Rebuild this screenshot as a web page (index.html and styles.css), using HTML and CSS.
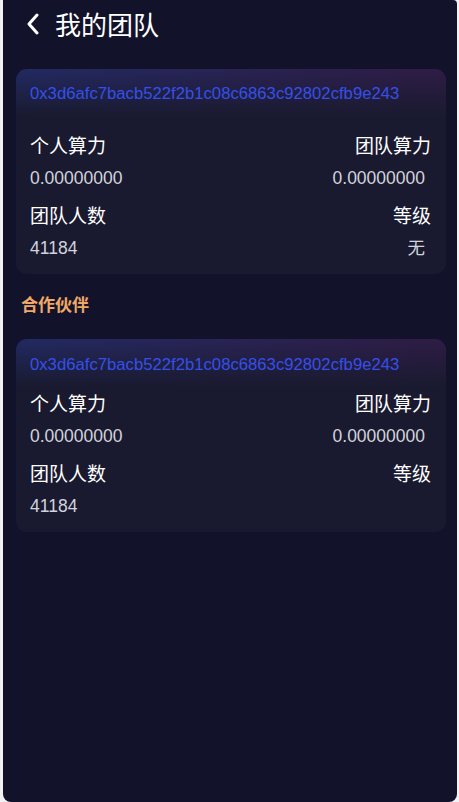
FILE: index.html
```html
<!DOCTYPE html>
<html lang="zh">
<head>
  <meta charset="UTF-8">
  <title>我的团队</title>
  <link rel="stylesheet" href="styles.css">
</head>
<body>
  <div class="app">
    <div class="header">
      <svg class="back" width="16" height="22" viewBox="0 0 16 22">
        <path d="M12 2 L4 11 L12 20" fill="none" stroke="#fff" stroke-width="3" stroke-linecap="round" stroke-linejoin="round"/>
      </svg>
      <h1 class="title">我的团队</h1>
    </div>

    <div class="content">
      <div class="card card-main">
        <div class="address">0x3d6afc7bacb522f2b1c08c6863c92802cfb9e243</div>
        <div class="row">
          <span class="label">个人算力</span>
          <span class="label">团队算力</span>
        </div>
        <div class="row values">
          <span class="value">0.00000000</span>
          <span class="value right">0.00000000</span>
        </div>
        <div class="row second">
          <span class="label">团队人数</span>
          <span class="label">等级</span>
        </div>
        <div class="row values">
          <span class="value">41184</span>
          <span class="value right">无</span>
        </div>
      </div>

      <div class="section-title">合作伙伴</div>

      <div class="card">
        <div class="address">0x3d6afc7bacb522f2b1c08c6863c92802cfb9e243</div>
        <div class="row">
          <span class="label">个人算力</span>
          <span class="label">团队算力</span>
        </div>
        <div class="row values">
          <span class="value">0.00000000</span>
          <span class="value right">0.00000000</span>
        </div>
        <div class="row second">
          <span class="label">团队人数</span>
          <span class="label">等级</span>
        </div>
        <div class="row values">
          <span class="value">41184</span>
          <span class="value right"></span>
        </div>
      </div>
    </div>
  </div>
</body>
</html>
```

FILE: styles.css
```css
html, body {
  margin: 0;
  padding: 0;
  background: #f2f2f4;
}

body {
  font-family: "Liberation Sans", "Noto Sans CJK SC", sans-serif;
  color: #fff;
}

.app {
  margin-left: 3px;
  width: 454px;
  height: 802px;
  background: #12122a;
  border-radius: 0 4px 8px 8px;
  overflow: hidden;
}

.header {
  height: 48px;
  display: flex;
  align-items: center;
  padding-left: 22px;
}

.back {
  margin-right: 14px;
}

.title {
  margin: 0;
  font-family: "Noto Sans CJK SC", sans-serif;
  font-size: 26px;
  font-weight: 400;
  line-height: 30px;
}

.content {
  padding: 21px 11px 0 13px;
}

.card {
  border-radius: 11px;
  padding: 14px 15px 14px 14px;
  background:
    linear-gradient(to bottom, rgba(25, 26, 47, 0) 0, #191a2f 48px),
    linear-gradient(to right, #222a62, #2f1c45);
  background-color: #191a2f;
}

.card-main {
  padding-top: 13px;
  padding-bottom: 14px;
}

.address {
  font-size: 16.7px;
  line-height: 24px;
  color: #3550ea;
  margin-bottom: 13px;
}

.card-main .address {
  margin-bottom: 26px;
}

.row {
  display: flex;
  justify-content: space-between;
}

.label {
  font-family: "Noto Sans CJK SC", sans-serif;
  font-size: 19px;
  line-height: 26px;
}

.values {
  margin-top: 8px;
}

.second {
  margin-top: 12px;
}

.value {
  font-size: 17.5px;
  line-height: 24px;
  color: #d2d3dc;
}

.value.right {
  padding-right: 6px;
}

.section-title {
  margin: 18px 0 23px 5px;
  font-family: "Noto Sans CJK SC", sans-serif;
  font-size: 17px;
  font-weight: 700;
  line-height: 24px;
  color: #efa867;
}
```
